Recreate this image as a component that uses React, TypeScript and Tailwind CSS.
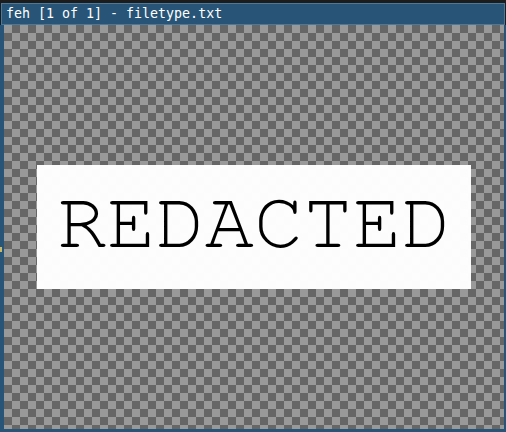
import React from "react";

export default function App() {
  return (
    <div className="relative flex h-[432px] w-[506px] flex-col bg-[#1c1c1c] pt-[3px]">
      <div className="mx-[1px] flex h-[22px] items-center border border-[#4c7899] bg-[#285577] px-[4px] font-['DejaVu_Sans_Mono',monospace] text-[13.3px] leading-none text-white whitespace-pre">
        feh [1 of 1] - filetype.txt
      </div>
      <div className="flex flex-1 items-center justify-center border-b-[3px] border-l-[4px] border-r-[2px] border-[#285577] bg-[#999999] bg-[image:conic-gradient(#666666_25%,#999999_0_50%,#666666_0_75%,#999999_0)] bg-[length:16px_16px]">
        <div className="flex h-[124px] w-[434px] items-center justify-center bg-white/[0.98] pb-[10px]">
          <span className="font-['Nimbus_Mono_PS','Nimbus_Mono_L','FreeMono','Courier','Courier_10_Pitch','Liberation_Mono',monospace] text-[82px] leading-none text-black">
            REDACTED
          </span>
        </div>
      </div>
      <span className="absolute left-0 top-[247px] h-[5px] w-[2px] bg-[#c9b86a]" />
    </div>
  );
}
